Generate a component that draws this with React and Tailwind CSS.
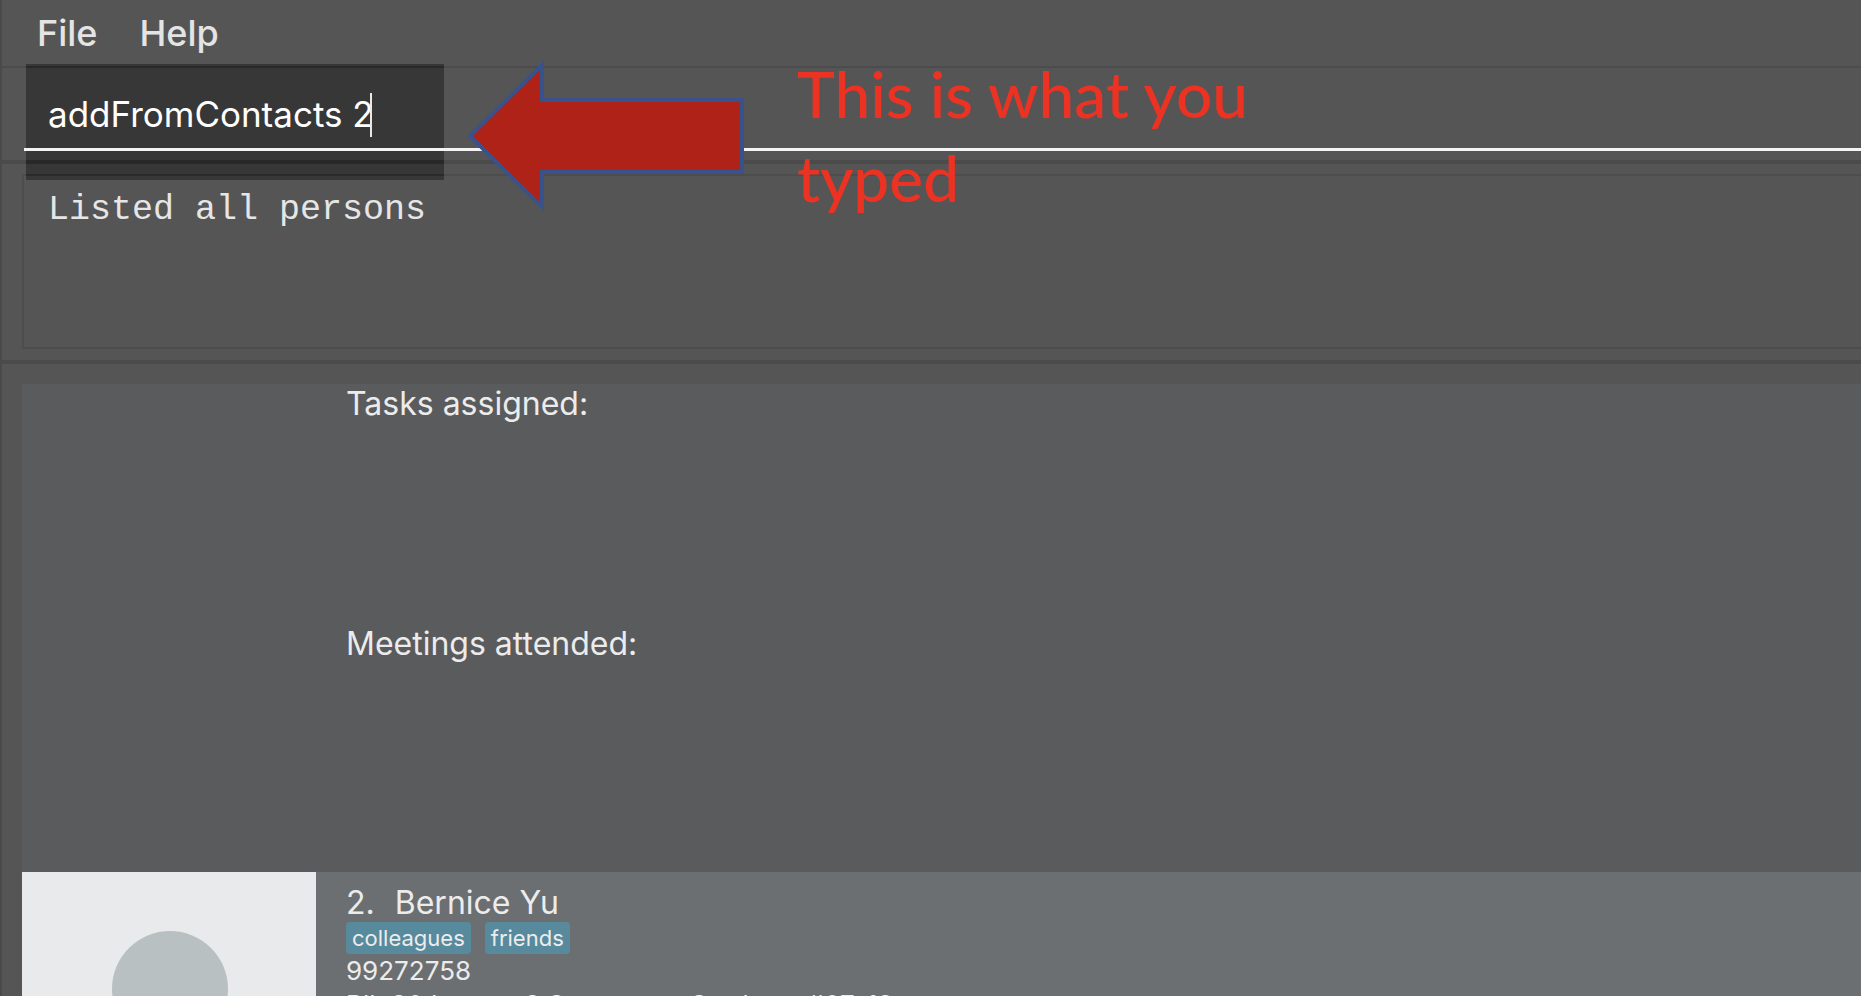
const tags = ['colleagues', 'friends'];

function MenuBar() {
  return (
    <nav aria-label="Main menu" className="flex h-[66px] items-center gap-[42px] pl-[35px] text-[36px] leading-[44px] font-medium text-[#e4e4e4]">
      <button type="button">File</button>
      <button type="button">Help</button>
    </nav>
  );
}

function CommandBox() {
  return (
    <form className="relative border-t-2 border-[#4c4c4c] pt-[12px] pb-[9px] pl-[22px]" onSubmit={(e) => e.preventDefault()}>
      <div className="absolute -top-[4px] left-[24px] flex h-[116px] w-[418px] flex-col bg-black/35 pt-[2px]">
        <div className="h-[2px] bg-black/15" />
        <div className="mt-[92px] h-[4px] bg-black/15" />
        <div className="mt-[10px] h-[2px] bg-black/15" />
      </div>
      <div className="relative flex h-[71px] items-center border-b-3 border-[#f4f4f4] pl-[24px]">
        <input
          aria-label="Command"
          defaultValue="addFromContacts 2"
          className="h-[58px] w-full bg-transparent text-[35px] text-white outline-none"
        />
        <span className="absolute top-[13px] left-[346px] h-[44px] w-[2px] bg-[#e8e8e8]" />
      </div>
    </form>
  );
}

function ResultDisplay() {
  return (
    <section aria-label="Result" className="border-y-4 border-[#4b4b4b] pt-[10px] pb-[11px] pl-[20px]">
      <output className="block h-[175px] border-2 border-r-0 border-[#4d4d4d] pt-[14px] pl-[24px] font-['Liberation_Mono',monospace] text-[35px] leading-[40px] text-[#e6e6e6]">
        Listed all persons
      </output>
    </section>
  );
}

function PersonList() {
  return (
    <main className="pt-[20px] pl-[20px] text-[32px] leading-[40px] text-[#ececec]">
      <article className="flex h-[488px] flex-col bg-[#5a5b5d] pl-[324px]">
        <h2 className="h-[240px]">Tasks assigned:</h2>
        <h2>Meetings attended:</h2>
      </article>
      <article className="flex h-[300px] bg-[#6b6f71]">
        <svg viewBox="0 0 294 294" className="size-[294px] shrink-0 bg-[#e8eaeb]" aria-label="Profile photo" role="img">
          <circle cx="148" cy="117" r="58" fill="#b9c0c2" />
          <path d="M40 294a107 107 0 0 1 214 0z" fill="#b9c0c2" />
        </svg>
        <div className="flex flex-col pt-[12px] pl-[30px] text-[26px] leading-[34px]">
          <h2 className="flex gap-[20px] text-[32px] leading-[38px]">
            <span>2.</span>
            <span>Bernice Yu</span>
          </h2>
          <ul className="flex gap-[14px] text-[22px] leading-[32px]">
            {tags.map((tag) => (
              <li key={tag} className="rounded-[4px] bg-[#578a9c] px-[6px]">{tag}</li>
            ))}
          </ul>
          <p>99272758</p>
          <p>Blk 30 Lorong 3 Serangoon Gardens, #07-18</p>
        </div>
      </article>
    </main>
  );
}

function Annotation() {
  return (
    <aside className="pointer-events-none absolute top-[60px] left-[464px] flex">
      <svg width="280" height="152" viewBox="0 0 280 152" aria-hidden="true" className="shrink-0">
        <path d="M4 76 76 5V40H276V112H76V147Z" fill="#ae2218" stroke="#3a528c" strokeWidth="4" />
      </svg>
      <p className="-mt-[8px] ml-[51px] w-[500px] font-['Lato',sans-serif] text-[64px] leading-[84px] font-medium text-[#ec3323]">
        This is what you typed
      </p>
    </aside>
  );
}

export default function App() {
  return (
    <div className="relative h-screen overflow-hidden border-l-2 border-[#4a4a4a] bg-[#555555] font-['Inter',sans-serif]">
      <MenuBar />
      <CommandBox />
      <ResultDisplay />
      <PersonList />
      <Annotation />
    </div>
  );
}
